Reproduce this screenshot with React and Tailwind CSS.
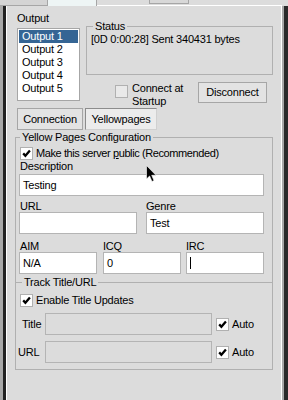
import React from 'react';

function Check({ checked = false, disabled = false }) {
  return (
    <div
      className={`w-[13px] h-[13px] shrink-0 border border-[#b0b0b0] flex items-center justify-center ${
        disabled ? 'bg-[#e9e9e9]' : 'bg-white'
      }`}
    >
      {checked && (
        <svg width="9" height="9" viewBox="0 0 9 9">
          <polyline points="1.2,4.4 3.4,6.8 7.9,1.6" fill="none" stroke="#000" strokeWidth="2.3" />
        </svg>
      )}
    </div>
  );
}

function Field({ value, className = '', disabled = false, caret = false }) {
  return (
    <div
      className={`h-[22px] border border-[#b4b4b4] px-[3px] flex items-center leading-[13px] ${
        disabled ? 'bg-[#dcdcdc]' : 'bg-white'
      } ${className}`}
    >
      {value}
      {caret && <span className="w-[1px] h-[12px] bg-black" />}
    </div>
  );
}

function Button({ children, className = '', pressed = false }) {
  return (
    <div
      className={`flex items-center justify-center leading-[13px] border ${
        pressed
          ? 'bg-[#ececec] border-t-[#8c8c8c] border-l-[#8c8c8c] border-r-[#d0d0d0] border-b-[#d0d0d0]'
          : 'bg-[#e3e3e3] border-[#a6a6a6]'
      } ${className}`}
    >
      {children}
    </div>
  );
}

export default function App() {
  const outputs = ['Output 1', 'Output 2', 'Output 3', 'Output 4', 'Output 5'];

  return (
    <div className="relative w-[288px] h-[400px] bg-[#dcdcdc] flex flex-col overflow-hidden text-[11px] tracking-[-0.2px] text-black font-['Liberation_Sans',Arial,sans-serif]">
      {/* tab strip, cut off at the top */}
      <div className="h-[6px] flex shrink-0">
        <div className="w-[48px] bg-[#d4d4d4] border-r border-b border-[#a6a6a6]" />
        <div className="w-[49px] bg-[#eef5f5] border-r border-[#a6a6a6]" />
        <div className="w-[52px] border-b border-white" />
        <div className="w-[40px] flex flex-col">
          <div className="h-[4px] bg-[#d8d8d8] border-x border-b border-[#a6a6a6]" />
          <div className="flex-1 border-b border-white" />
        </div>
        <div className="w-[93px] border-b border-white" />
        <div className="flex-1" />
      </div>

      <div className="flex flex-1">
        {/* left frame */}
        <div className="w-[3px] bg-[#a8a8a8]" />
        <div className="w-[3px] bg-[#222]" />
        <div className="w-[1px] bg-white" />

        <div className="flex-1 flex flex-col pl-[8px] pr-[8px] pt-[6px]">
          <div className="flex items-start">
            <div className="ml-[2px] w-[63px] flex flex-col">
              <div className="leading-[13px]">Output</div>
              <div className="mt-[3px] h-[73px] bg-white border border-[#a6a6a6] flex flex-col">
                {outputs.map((o, i) => (
                  <div
                    key={o}
                    className={`mx-[1px] h-[13px] pl-[3px] leading-[13px] ${
                      i === 0 ? 'mt-[1px] bg-[#356594] text-white' : ''
                    }`}
                  >
                    {o}
                  </div>
                ))}
              </div>
            </div>

            <div className="ml-[6px] flex-1 flex flex-col mt-[8px]">
              <fieldset className="h-[55px] border border-[#b0b0b0]">
                <legend className="ml-[6px] px-[2px] leading-[13px]">Status</legend>
                <div className="pl-[4px] leading-[13px]">[0D 0:00:28] Sent 340431 bytes</div>
              </fieldset>
              <div className="h-[33px] flex items-start">
                <div className="ml-[29px] mt-[10px]">
                  <Check disabled />
                </div>
                <div className="ml-[4px] mt-[7px] leading-[13px]">
                  Connect at
                  <br />
                  Startup
                </div>
                <div className="flex-1" />
                <Button className="mt-[7px] mr-[6px] w-[69px] h-[21px]">Disconnect</Button>
              </div>
            </div>
          </div>

          <div className="flex">
            <Button className="ml-[2px] w-[66px] h-[22px]">Connection</Button>
            <Button pressed className="ml-[2px] w-[72px] h-[22px]">
              Yellowpages
            </Button>
          </div>

          <fieldset className="mt-[1px] h-[151px] border border-b-0 border-[#b0b0b0] flex flex-col">
            <legend className="ml-[4px] px-[2px] leading-[13px]">Yellow Pages Configuration</legend>
            <div className="mt-[3px] h-[13px] flex items-center">
              <div className="ml-[4px]">
                <Check checked />
              </div>
              <div className="ml-[3px] leading-[13px] tracking-[-0.4px]">
                Make this server <span className="underline">p</span>ublic (Recommended)
              </div>
            </div>
            <div className="ml-[4px] leading-[12px]">Description</div>
            <Field value="Testing" className="mt-[2px] ml-[3px] w-[245px]" />

            <div className="mt-[4px] flex">
              <div className="ml-[3px] w-[118px] flex flex-col">
                <div className="pl-[1px] leading-[12px]">URL</div>
                <Field value="" />
              </div>
              <div className="ml-[9px] w-[118px] flex flex-col">
                <div className="leading-[12px]">Genre</div>
                <Field value="Test" />
              </div>
            </div>

            <div className="mt-[6px] flex">
              <div className="ml-[3px] w-[78px] flex flex-col">
                <div className="pl-[1px] leading-[12px]">AIM</div>
                <Field value="N/A" />
              </div>
              <div className="ml-[6px] w-[78px] flex flex-col">
                <div className="leading-[12px]">ICQ</div>
                <Field value="0" />
              </div>
              <div className="ml-[5px] w-[78px] flex flex-col">
                <div className="leading-[12px]">IRC</div>
                <Field value="" caret />
              </div>
            </div>
          </fieldset>

          <fieldset className="-mt-[6px] h-[94px] border border-[#b0b0b0] flex flex-col">
            <legend className="ml-[6px] px-[2px] leading-[13px]">Track Title/URL</legend>
            <div className="mt-[5px] h-[13px] flex items-center">
              <div className="ml-[4px]">
                <Check checked />
              </div>
              <div className="ml-[3px] leading-[13px]">Enable Title Updates</div>
            </div>
            <div className="mt-[6px] flex items-center">
              <div className="w-[29px] pl-[6px] leading-[13px]">Title</div>
              <Field value="" disabled className="w-[167px]" />
              <div className="ml-[4px]">
                <Check checked />
              </div>
              <div className="ml-[3px] leading-[13px]">Auto</div>
            </div>
            <div className="mt-[6px] flex items-center">
              <div className="w-[29px] pl-[2px] leading-[13px]">URL</div>
              <Field value="" disabled className="w-[167px]" />
              <div className="ml-[4px]">
                <Check checked />
              </div>
              <div className="ml-[3px] leading-[13px]">Auto</div>
            </div>
          </fieldset>
        </div>

        {/* right frame */}
        <div className="w-[1px] bg-white" />
        <div className="w-[2px] bg-[#a8a8a8]" />
        <div className="w-[4px] bg-[#2a2a2a]" />
      </div>

      {/* mouse pointer over the dialog */}
      <svg className="absolute left-[146px] top-[165px]" width="11" height="18" viewBox="0 0 11 18">
        <path d="M0.5 0.5 L0.5 14 L3.6 11 L6 16.5 L8 15.6 L5.7 10.3 L10 10.3 Z" fill="#000" stroke="#fff" strokeWidth="0.6" />
      </svg>
    </div>
  );
}
